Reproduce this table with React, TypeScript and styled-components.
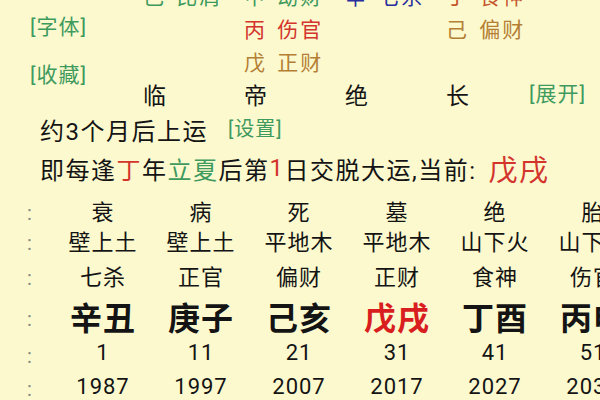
import React from 'react';
import styled, { createGlobalStyle } from 'styled-components';

const Global = createGlobalStyle`
  html, body { margin: 0; padding: 0; background: #fcf9cf; }
  body {
    width: 600px; height: 400px; overflow: hidden;
    font-family: Roboto, "Noto Sans CJK SC", sans-serif;
    color: #141414;
  }
`;

const C = {
  green: '#3f9a5e',
  red: '#d3352c',
  brown: '#b47f34',
  blue: '#2a2f9e',
  orange: '#c4552c',
  dark: '#141414',
};

const Page = styled.div`
  width: 600px;
  height: 400px;
  overflow: hidden;
  background: #fcf9cf;
`;

const Top = styled.div`
  display: flex;
  margin-top: -22px;
  height: 132px;
`;

const Labels = styled.div`
  width: 113px;
  padding-left: 30px;
  padding-top: 35px;
  display: flex;
  flex-direction: column;
  gap: 20px;
`;

const Link = styled.span<{ $size?: number }>`
  color: ${C.green};
  font-size: ${(p) => p.$size ?? 21}px;
  letter-spacing: 1px;
  line-height: 28px;
  white-space: nowrap;
`;

const PillarGrid = styled.div`
  display: grid;
  grid-template-columns: 101px 101px 101px 83px 1fr;
  grid-auto-rows: 33px;
  align-items: center;
`;

const Tag = styled.span<{ $color: string }>`
  color: ${(p) => p.$color};
  font-size: 21px;
  letter-spacing: 2px;
  white-space: nowrap;
  word-spacing: 3px;
`;

const Phase = styled.span`
  font-size: 23px;
  color: ${C.dark};
`;

const Info = styled.div<{ $h: number }>`
  height: ${(p) => p.$h}px;
  display: flex;
  align-items: center;
  padding-left: 40px;
  font-size: 24px;
  letter-spacing: 1.5px;
  white-space: nowrap;
`;

const Tint = styled.span<{ $color: string; $size?: number }>`
  color: ${(p) => p.$color};
  font-size: ${(p) => (p.$size ? `${p.$size}px` : 'inherit')};
`;

const Gap = styled.span<{ $w: number }>`
  display: inline-block;
  width: ${(p) => p.$w}px;
`;

const Table = styled.div`
  margin-top: 6px;
`;

const Row = styled.div<{ $h: number; $size: number; $bold?: boolean }>`
  display: grid;
  grid-template-columns: 54px repeat(6, 98px);
  height: ${(p) => p.$h}px;
  align-items: center;
  font-size: ${(p) => p.$size}px;
  font-weight: ${(p) => (p.$bold ? 700 : 400)};
`;

const Colon = styled.span`
  padding-left: 27px;
  font-size: 20px;
  font-weight: 400;
  color: #8a8a80;
  position: relative;
  top: 3px;
`;

const Cell = styled.span<{ $color?: string }>`
  text-align: center;
  white-space: nowrap;
  letter-spacing: 1px;
  color: ${(p) => p.$color ?? C.dark};
`;

const topRows: Array<Array<[string, string] | null>> = [
  [['己 比肩', C.green], ['甲 劫财', C.green], ['辛 七杀', C.blue], ['丁 食神', C.orange]],
  [null, ['丙 伤官', C.red], null, ['己 偏财', C.brown]],
  [null, ['戊 正财', C.brown], null, null],
];

const phases = ['临', '帝', '绝', '长'];

const rows: Array<{ h: number; size: number; bold?: boolean; cells: string[] }> = [
  { h: 30, size: 22, cells: ['衰', '病', '死', '墓', '绝', '胎'] },
  { h: 32, size: 22, cells: ['壁上土', '壁上土', '平地木', '平地木', '山下火', '山下火'] },
  { h: 37, size: 22, cells: ['七杀', '正官', '偏财', '正财', '食神', '伤官'] },
  { h: 42, size: 32, bold: true, cells: ['辛丑', '庚子', '己亥', '戊戌', '丁酉', '丙申'] },
  { h: 35, size: 22, cells: ['1', '11', '21', '31', '41', '51'] },
  { h: 32, size: 22, cells: ['1987', '1997', '2007', '2017', '2027', '2037'] },
];

export default function App() {
  return (
    <Page>
      <Global />
      <Top>
        <Labels>
          <Link>[字体]</Link>
          <Link>[收藏]</Link>
        </Labels>
        <PillarGrid>
          {topRows.map((r, ri) => (
            <React.Fragment key={ri}>
              {r.map((c, ci) => (c ? <Tag key={ci} $color={c[1]}>{c[0]}</Tag> : <span key={ci} />))}
              <span />
            </React.Fragment>
          ))}
          {phases.map((p) => (
            <Phase key={p}>{p}</Phase>
          ))}
          <Link>[展开]</Link>
        </PillarGrid>
      </Top>
      <Info $h={38}>
        约3个月后上运
        <Gap $w={20} />
        <Link $size={20}>[设置]</Link>
      </Info>
      <Info $h={40}>
        即每逢<Tint $color={C.red}>丁</Tint>年<Tint $color={C.green}>立夏</Tint>后第<Tint $color={C.red}>1</Tint>
        日交脱大运,当前:
        <Gap $w={12} />
        <Tint $color={C.red} $size={29}>戊戌</Tint>
      </Info>
      <Table>
        {rows.map((r, i) => (
          <Row key={i} $h={r.h} $size={r.size} $bold={r.bold}>
            <Colon>:</Colon>
            {r.cells.map((c, j) => (
              <Cell key={j} $color={r.bold && c === '戊戌' ? '#d81e1e' : undefined}>{c}</Cell>
            ))}
          </Row>
        ))}
      </Table>
    </Page>
  );
}
